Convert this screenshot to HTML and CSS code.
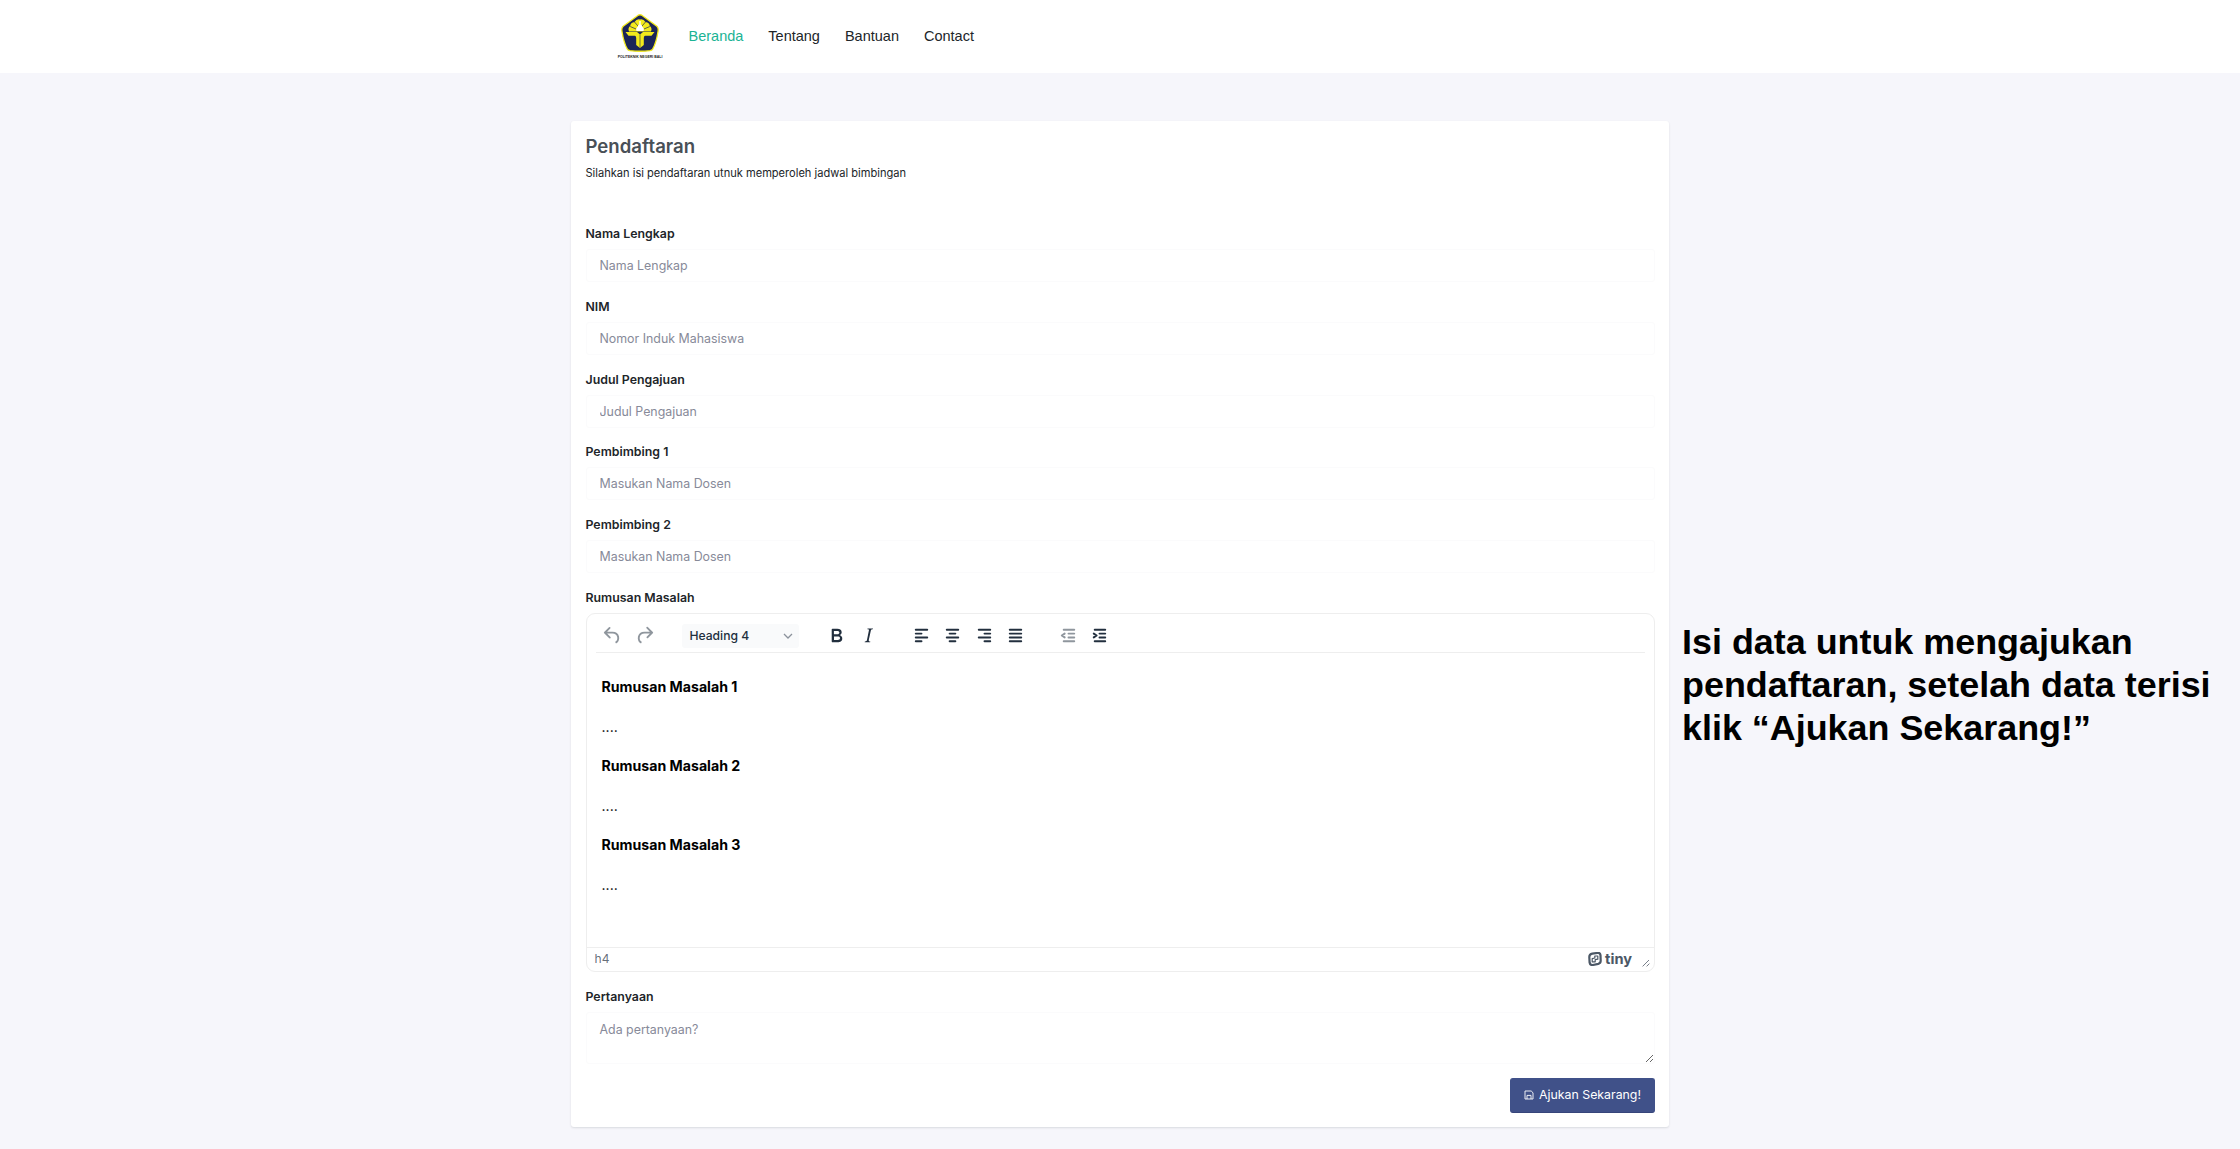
FILE: index.html
```html
<!DOCTYPE html>
<html lang="id">
<head>
<meta charset="utf-8">
<title>Pendaftaran</title>
<link rel="stylesheet" href="styles.css">
</head>
<body>
<header class="topbar">
  <div class="brand">
    <svg class="brand-mark" viewBox="0 0 38 38" width="38" height="38">
      <path d="M17.2 1.2Q19 .3 20.8 1.2L35.8 12.2Q37.6 13.6 37.1 17Q35.2 29 31.6 35.2Q30.8 36.4 29 36.7Q19 37.8 9 36.7Q7.200 36.400 6.400 35.200Q2.800 29 .9 17Q.4 13.600 2.200 12.200Z" fill="#1b2558" stroke="#f3ea1c" stroke-width="1.300"/>
      <path d="M19 5.500Q22.500 4.800 24.500 8Q28.500 8.500 28.800 12Q31.500 14 30 17.500H8Q6.500 14 9.200 12Q9.500 8.500 13.500 8Q15.500 4.800 19 5.500Z" fill="#f3ea1c"/>
      <path d="M13.500 8L17 12M24.500 8L21 12M9.200 12.500L15 15M28.800 12.500L23 15" stroke="#1b2558" stroke-width=".7"/>
      <path d="M18.300 7h1.400v3.600q1.500.4 1.500 2.200q2.200 1.200 1.300 4.200h-7q-.9-3 1.300-4.200q0-1.800 1.500-2.200Z" fill="#fff"/>
      <path d="M4.500 18H16L19 20.500 22 18H33.500L30.500 21.800H24Q22.800 22 22.800 24V31L19 34 15.200 31V24Q15.200 22 14 21.800H7.500Z" fill="#f3ea1c"/>
      <path d="M19 20.500V33.500" stroke="#1b2558" stroke-width=".6"/>
    </svg>
    <span class="brand-name">POLITEKNIK NEGERI BALI</span>
  </div>
  <nav class="nav">
    <a class="nav-link is-active">Beranda</a>
    <a class="nav-link">Tentang</a>
    <a class="nav-link">Bantuan</a>
    <a class="nav-link">Contact</a>
  </nav>
</header>

<main class="page">
  <form class="card">
    <h1 class="card-title">Pendaftaran</h1>
    <p class="card-text">Silahkan isi pendaftaran utnuk memperoleh jadwal bimbingan</p>

    <div class="fields">
      <div class="field"><label class="label">Nama Lengkap</label><input class="input" placeholder="Nama Lengkap"></div>
      <div class="field"><label class="label">NIM</label><input class="input" placeholder="Nomor Induk Mahasiswa"></div>
      <div class="field"><label class="label">Judul Pengajuan</label><input class="input" placeholder="Judul Pengajuan"></div>
      <div class="field"><label class="label">Pembimbing 1</label><input class="input" placeholder="Masukan Nama Dosen"></div>
      <div class="field"><label class="label">Pembimbing 2</label><input class="input" placeholder="Masukan Nama Dosen"></div>

      <div class="field">
        <label class="label">Rumusan Masalah</label>
        <div class="editor">
          <div class="toolbar">
            <div class="group group-history">
              <svg class="icon is-off" viewBox="0 0 24 24"><path d="M6.400 8H12c3.700 0 6.200 2 6.800 5.100.6 2.700-.4 5.600-2.300 6.800a1 1 0 0 1-1-1.800c1.100-.6 1.800-2.700 1.400-4.600-.5-2.100-2.100-3.500-4.900-3.500H6.400l3.300 3.300a1 1 0 1 1-1.400 1.400l-5-5a1 1 0 0 1 0-1.400l5-5a1 1 0 0 1 1.400 1.400L6.400 8Z"/></svg>
              <svg class="icon is-off" viewBox="0 0 24 24"><path d="M17.600 10H12c-2.800 0-4.400 1.400-4.900 3.500-.4 2 .3 4 1.400 4.600a1 1 0 1 1-1 1.800c-2-1.200-2.900-4.100-2.300-6.800.6-3 3-5.100 6.800-5.100h5.600l-3.300-3.300a1 1 0 1 1 1.400-1.400l5 5a1 1 0 0 1 0 1.400l-5 5a1 1 0 0 1-1.400-1.400l3.300-3.300Z"/></svg>
            </div>
            <div class="format">
              <span>Heading 4</span>
              <svg class="chevron" viewBox="0 0 10 6"><path d="M1 1l4 4 4-4"/></svg>
            </div>
            <div class="group group-style">
              <svg class="icon" viewBox="0 0 24 24"><path d="M7.800 19c-.3 0-.5 0-.6-.2l-.2-.5V5.700c0-.2 0-.4.2-.5l.6-.2h5c1.500 0 2.700.3 3.500 1 .7.6 1.100 1.400 1.100 2.500a3 3 0 0 1-.6 1.900c-.4.6-1 1-1.600 1.200.4.1.9.3 1.300.6s.8.7 1 1.200c.4.4.5 1 .5 1.600 0 1.300-.4 2.300-1.300 3-.8.7-2.100 1-3.800 1H7.800Zm5-8.300c.6 0 1.200-.1 1.600-.5.4-.3.6-.7.6-1.300 0-1.100-.8-1.700-2.300-1.700H9.300v3.500h3.400Zm.5 6c.7 0 1.300-.1 1.700-.4.4-.4.6-.9.6-1.500s-.2-1-.7-1.400c-.4-.3-1-.4-2-.4H9.400v3.800h4Z"/></svg>
              <svg class="icon" viewBox="0 0 24 24"><path d="m16.700 4.700-.1.9h-.3c-.6 0-1 0-1.400.3-.3.3-.4.6-.5 1.100l-2.100 9.800v.6c0 .5.4.8 1.400.8h.2l-.2.8H8l.2-.8h.2c1.100 0 1.800-.5 2-1.500l2-9.800.1-.5c0-.6-.4-.8-1.400-.8h-.3l.2-.9h5.800Z"/></svg>
            </div>
            <div class="group group-align">
              <svg class="icon line-icon" viewBox="0 0 24 24"><path d="M6 6h12M6 10h6M6 14h12M6 18h6"/></svg>
              <svg class="icon line-icon" viewBox="0 0 24 24"><path d="M6 6h12M9 10h6M6 14h12M9 18h6"/></svg>
              <svg class="icon line-icon" viewBox="0 0 24 24"><path d="M6 6h12M12 10h6M6 14h12M12 18h6"/></svg>
              <svg class="icon line-icon" viewBox="0 0 24 24"><path d="M6 6h12M6 10h12M6 14h12M6 18h12"/></svg>
            </div>
            <div class="group group-indent">
              <svg class="icon line-icon is-off" viewBox="0 0 24 24"><path d="M7 6h11M12 10h6M12 14h6M7 18h11M8 10l-3 2 3 2"/></svg>
              <svg class="icon line-icon" viewBox="0 0 24 24"><path d="M7 6h11M12 10h6M12 14h6M7 18h11M6 10l3 2-3 2"/></svg>
            </div>
          </div>
          <div class="content">
            <h4>Rumusan Masalah 1</h4>
            <p>....</p>
            <h4>Rumusan Masalah 2</h4>
            <p>....</p>
            <h4>Rumusan Masalah 3</h4>
            <p>....</p>
          </div>
          <div class="statusbar">
            <span class="path">h4</span>
            <div class="tiny">
              <svg viewBox="0 0 14 14" width="14" height="14"><path d="M4.300 1.700 9.500.9Q12.200.6 12.500 3.200L12.700 8.800Q12.700 11.300 10.300 11.900L4.800 13Q1.900 13.300 1.600 10.700L1.300 5Q1.300 2.300 4.300 1.700Z"/><path d="M4.200 6.600 6.800 6V4H9.800V7.200L7.200 7.700V9.800H4.200Z"/></svg>
              <span class="tiny-name">tiny</span>
            </div>
            <svg class="grip" viewBox="0 0 8 8"><path d="M.6 7.400 7 1M4.600 7.400 7.400 4.600"/></svg>
          </div>
        </div>
      </div>

      <div class="field"><label class="label">Pertanyaan</label><textarea class="input textarea" placeholder="Ada pertanyaan?"></textarea></div>
    </div>

    <div class="actions">
      <button class="button" type="button">
        <svg viewBox="0 0 10 10" width="10" height="10"><path d="M1 1h6.200L9 2.800V9H1ZM3 9V5.400h4V9"/></svg>
        <span>Ajukan Sekarang!</span>
      </button>
    </div>
  </form>
  <aside class="note">Isi data untuk mengajukan<br>pendaftaran, setelah data terisi<br>klik “Ajukan Sekarang!”</aside>
</main>
</body>
</html>
```
FILE: styles.css
```css
* { box-sizing: border-box; }
body {
  margin: 0;
  height: 1149px;
  overflow: hidden;
  background: #f6f6fb;
  color: #212529;
  font-family: Inter, "Open Sans", sans-serif;
}
h1, h4, p { margin: 0; }

.topbar {
  display: flex;
  height: 73px;
  padding-left: 617px;
  background: #fff;
}
.brand {
  display: flex;
  flex-direction: column;
  align-items: center;
  width: 46px;
  padding-top: 14px;
}
.brand-mark { display: block; }
.brand-name {
  margin-top: 3px;
  color: #222;
  font: bold 3.500px/5px "Liberation Sans", sans-serif;
  white-space: nowrap;
}
.nav {
  display: flex;
  gap: 25px;
  padding: 26px 0 0 25.500px;
}
.nav-link {
  color: #212529;
  font: 14.500px/20px "Liberation Sans", Arial, sans-serif;
}
.nav-link.is-active { color: #1bb394; }

.page {
  display: grid;
  grid-template-columns: 1098px 1fr;
  align-items: start;
  padding: 48px 0 0 571px;
}
.card {
  height: 1006px;
  padding: 14px 14px 14px 14.500px;
  border-radius: 3px;
  background: #fff;
  box-shadow: 0 1px 2px rgba(56, 65, 74, .15);
}
.card-title {
  color: #495057;
  font-size: 18.600px;
  font-weight: 600;
  line-height: 22px;
}
.card-text {
  margin-top: 8px;
  font-size: 11.080px;
  line-height: 16px;
}
.fields {
  display: flex;
  flex-direction: column;
  gap: 15.800px;
  margin-top: 44px;
}
.field {
  display: flex;
  flex-direction: column;
  gap: 7px;
}
.field:last-child { margin-top: -.5px; }
.label {
  font-size: 12.350px;
  font-weight: 600;
  line-height: 17px;
}
.input {
  display: block;
  width: 100%;
  height: 33px;
  padding: 0 13px;
  border: 1px solid #fbfbfc;
  border-radius: 3px;
  background: #fff;
  font: 12.400px/18px Inter, "Open Sans", sans-serif;
}
.input::placeholder { color: #878a99; opacity: 1; }
.textarea { height: 52px; padding-top: 8px; }

.editor {
  display: flex;
  flex-direction: column;
  height: 359.500px;
  border: 1.500px solid #eee;
  border-radius: 9px;
  overflow: hidden;
}
.toolbar {
  display: flex;
  align-items: center;
  height: 39.500px;
  margin: 0 9.500px;
  padding: 5px 0 0 4.500px;
  border-bottom: 1px solid #eee;
}
.group { display: flex; gap: 8.500px; }
.group-history { gap: 9.900px; }
.group-style { margin-left: 26.600px; }
.group-align { margin-left: 29.600px; }
.group-indent { margin-left: 29.500px; }
.icon {
  width: 23px;
  height: 23px;
  fill: #222f3e;
}
.line-icon {
  fill: none;
  stroke: #222f3e;
  stroke-width: 2;
  stroke-linecap: round;
  stroke-linejoin: round;
}
.is-off { opacity: .5; }
.format {
  display: flex;
  align-items: center;
  justify-content: space-between;
  width: 116.500px;
  height: 24px;
  margin-left: 26px;
  padding: 0 6px 0 7px;
  border-radius: 3px;
  background: #f9fafb;
  color: #222f3e;
  font-size: 12.150px;
  font-weight: 500;
}
.chevron {
  width: 10px;
  height: 6px;
  fill: none;
  stroke: #8b929b;
  stroke-width: 1.300;
}
.content {
  flex: 1;
  margin-top: 14px;
  padding-left: 15px;
  color: #000;
  font-size: 14.150px;
  line-height: 39.400px;
}
.content h4 { font-size: inherit; font-weight: 700; }
.statusbar {
  display: flex;
  align-items: center;
  height: 24px;
  padding: 0 4px 2px 8px;
  border-top: 1px solid #eee;
  color: rgba(34, 47, 62, .7);
}
.path { flex: 1; font-size: 12.120px; }
.tiny {
  display: flex;
  align-items: center;
  gap: 3px;
  margin-right: 10px;
}
.tiny path {
  fill: none;
  stroke: #4c5866;
  stroke-width: 2.200;
  stroke-linejoin: round;
}
.tiny path + path { stroke-width: 1.200; }
.tiny-name {
  color: #4c5866;
  font-size: 14.600px;
  font-weight: 700;
  line-height: 20px;
}
.grip {
  align-self: flex-end;
  width: 8px;
  height: 8px;
  margin-bottom: 2px;
  fill: none;
  stroke: #777f89;
}

.actions {
  display: flex;
  justify-content: flex-end;
  margin-top: 14px;
}
.button {
  display: flex;
  align-items: center;
  justify-content: center;
  gap: 5px;
  width: 145px;
  height: 35px;
  padding: 0;
  border: 1px solid #405189;
  border-bottom-color: #36457a;
  border-radius: 3px;
  background: #405189;
  color: #fff;
  font: 12.330px/18px Inter, "Open Sans", sans-serif;
}
.button path { fill: none; stroke: #fff; stroke-width: .9; }

.note {
  padding: 499.500px 0 0 13px;
  color: #000;
  font: bold 35.900px/43px "Liberation Sans", Arial, sans-serif;
  white-space: nowrap;
}
```
